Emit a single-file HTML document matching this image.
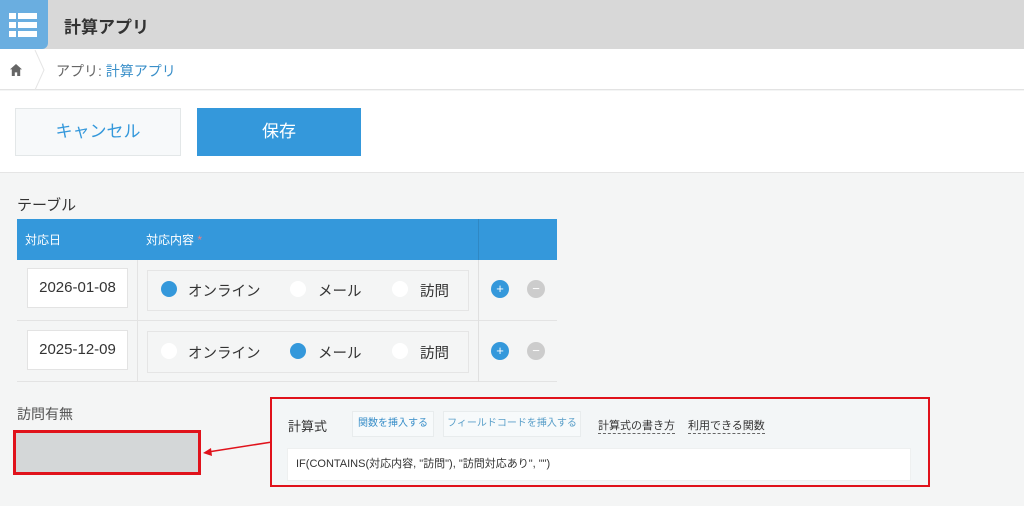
<!DOCTYPE html><html><head><meta charset="utf-8"><style>
*{margin:0;padding:0;box-sizing:border-box}
body{width:1024px;height:506px;overflow:hidden;background:#f4f5f5;font-family:"Liberation Sans","Noto Sans CJK JP",sans-serif;color:#333;position:relative}
.a{position:absolute}
.radio{position:absolute;width:16px;height:16px;border-radius:50%;background:#fff}
.on{background:#3498db}
.rl{position:absolute;font-size:14.5px;color:#333}
</style></head><body>
<div class="a" style="left:0;top:0;width:1024px;height:49px;background:#d8d8d8"></div>
<div class="a" style="left:0;top:0;width:48px;height:49px;background:#6aaee0;border-radius:0 0 6px 0"></div>
<div class="a" style="left:9px;top:13px;width:28px;height:6px;background:#fff"></div>
<div class="a" style="left:9px;top:22px;width:28px;height:6px;background:#fff"></div>
<div class="a" style="left:9px;top:31px;width:28px;height:6px;background:#fff"></div>
<div class="a" style="left:16px;top:13px;width:2px;height:24px;background:#6aaee0"></div>
<div class="a" style="left:64px;top:13px;font-size:17px;font-weight:bold;color:#333">計算アプリ</div>
<div class="a" style="left:0;top:49px;width:1024px;height:41px;background:#fff;border-bottom:1px solid #e3e3e3"></div>
<div class="a" style="left:10px;top:64px;width:12px;height:12px;background:#666;clip-path:polygon(50% 0,100% 45%,85% 45%,85% 100%,60% 100%,60% 70%,40% 70%,40% 100%,15% 100%,15% 45%,0 45%)"></div>
<svg class="a" style="left:34px;top:50px" width="12" height="40"><path d="M1 0 L10 20 L1 40" stroke="#e5e5e5" fill="none"/></svg>
<div class="a" style="left:56px;top:61px;font-size:14px;color:#666">アプリ: <span style="color:#3a8fc9">計算アプリ</span></div>
<div class="a" style="left:0;top:91px;width:1024px;height:82px;background:#fff;border-bottom:1px solid #e5e5e5"></div>
<div class="a" style="left:15px;top:108px;width:166px;height:48px;background:#f7f9fa;border:1px solid #e3e7e8;font-size:17px;color:#3498db;text-align:center;line-height:46px">キャンセル</div>
<div class="a" style="left:197px;top:108px;width:164px;height:48px;background:#3498db;font-size:17px;color:#fff;text-align:center;line-height:48px">保存</div>
<div class="a" style="left:17px;top:194px;font-size:15px">テーブル</div>
<div class="a" style="left:17px;top:219px;width:540px;height:41px;background:#3498db"></div>
<div class="a" style="left:478px;top:219px;width:1px;height:41px;background:#2f88c4"></div>
<div class="a" style="left:25px;top:231px;font-size:12px;color:#fff">対応日</div>
<div class="a" style="left:146px;top:231px;font-size:12px;color:#fff">対応内容 <span style="color:#f47c7c">*</span></div>
<div class="a" style="left:17px;top:260px;width:540px;height:122px;border-bottom:1px solid #e3e3e3"></div>
<div class="a" style="left:17px;top:320px;width:540px;height:1px;background:#e3e3e3"></div>
<div class="a" style="left:137px;top:260px;width:1px;height:122px;background:#e3e3e3"></div>
<div class="a" style="left:478px;top:260px;width:1px;height:122px;background:#e0e0e0"></div>

<div class="a" style="left:27px;top:268px;width:101px;height:40px;background:#fff;border:1px solid #e3e3e3;font-size:15px;line-height:38px;text-align:center">2026-01-08</div>
<div class="a" style="left:147px;top:270px;width:322px;height:41px;border:1px solid #e5e5e5"></div>
<div class="radio on" style="left:161px;top:281px"></div><div class="rl" style="left:188px;top:280px">オンライン</div>
<div class="radio" style="left:290px;top:281px"></div><div class="rl" style="left:318px;top:280px">メール</div>
<div class="radio" style="left:392px;top:281px"></div><div class="rl" style="left:420px;top:280px">訪問</div>
<div class="a" style="left:491px;top:280px;width:18px;height:18px;border-radius:50%;background:#3498db;color:#fff;font-size:13px;line-height:18px;text-align:center">+</div>
<div class="a" style="left:527px;top:280px;width:18px;height:18px;border-radius:50%;background:#ccc;color:#fff;font-size:13px;line-height:17px;text-align:center">−</div>

<div class="a" style="left:27px;top:330px;width:101px;height:40px;background:#fff;border:1px solid #e3e3e3;font-size:15px;line-height:38px;text-align:center">2025-12-09</div>
<div class="a" style="left:147px;top:331px;width:322px;height:42px;border:1px solid #e5e5e5"></div>
<div class="radio" style="left:161px;top:343px"></div><div class="rl" style="left:188px;top:342px">オンライン</div>
<div class="radio on" style="left:290px;top:343px"></div><div class="rl" style="left:318px;top:342px">メール</div>
<div class="radio" style="left:392px;top:343px"></div><div class="rl" style="left:420px;top:342px">訪問</div>
<div class="a" style="left:491px;top:342px;width:18px;height:18px;border-radius:50%;background:#3498db;color:#fff;font-size:13px;line-height:18px;text-align:center">+</div>
<div class="a" style="left:527px;top:342px;width:18px;height:18px;border-radius:50%;background:#ccc;color:#fff;font-size:13px;line-height:17px;text-align:center">−</div>

<div class="a" style="left:17px;top:404px;font-size:14px;color:#555">訪問有無</div>
<div class="a" style="left:13px;top:430px;width:188px;height:45px;border:3px solid #e0121b;background:#d4d7d8"></div>
<svg class="a" style="left:200px;top:430px" width="75" height="30"><path d="M72 12 L8 22" stroke="#e0121b" stroke-width="1.5"/><path d="M3 23 L11 18 L12 26 Z" fill="#e0121b"/></svg>
<div class="a" style="left:270px;top:397px;width:660px;height:90px;border:2px solid #e0121b;background:#f3f6f7"></div>
<div class="a" style="left:288px;top:416px;font-size:13px">計算式</div>
<div class="a" style="left:352px;top:411px;width:82px;height:26px;border:1px solid #e8eced;background:#f7fafb;font-size:10px;color:#3a8fc9;line-height:24px;text-align:center">関数を挿入する</div>
<div class="a" style="left:443px;top:411px;width:138px;height:26px;border:1px solid #e8eced;background:#f7fafb;font-size:10px;color:#5a9fc9;line-height:24px;text-align:center">フィールドコードを挿入する</div>
<div class="a" style="left:598px;top:417px;font-size:11px;border-bottom:1px dashed #666">計算式の書き方</div>
<div class="a" style="left:688px;top:417px;font-size:11px;border-bottom:1px dashed #666">利用できる関数</div>
<div class="a" style="left:287px;top:448px;width:624px;height:33px;background:#fff;border:1px solid #eef0f0;font-size:11px;line-height:31px;padding-left:8px">IF(CONTAINS(対応内容, "訪問"), "訪問対応あり", "")</div>
</body></html>
